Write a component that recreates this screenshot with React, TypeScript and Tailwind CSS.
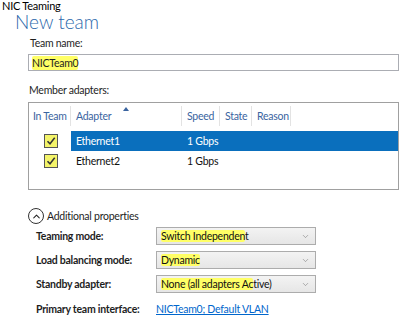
import { ChevronUp, ChevronDown } from 'lucide-react'

function Hl({ children }: { children: React.ReactNode }) {
  return <span className="bg-[#ffff66] rounded-[2px]">{children}</span>
}

function Check() {
  return (
    <div className="flex h-[14px] w-[14px] items-center justify-center border border-[#555] bg-[#f4f46a]">
      <svg width="10" height="10" viewBox="0 0 10 10">
        <path d="M1.5 5.2 L4 7.8 L8.7 1.8" fill="none" stroke="#333" strokeWidth="1.5" />
      </svg>
    </div>
  )
}

function Select({ children }: { children: React.ReactNode }) {
  return (
    <div className="flex h-[18px] w-[160px] items-center justify-between border border-[#acacac] bg-gradient-to-b from-[#f3f3f3] to-[#e6e6e6] pl-[4px] pr-[5px] text-[#111]">
      <span className="whitespace-nowrap">{children}</span>
      <ChevronDown size={9} strokeWidth={1.5} className="text-[#777]" />
    </div>
  )
}

export default function App() {
  const cols = [
    { name: 'Adapter', w: 'w-[111px]' },
    { name: 'Speed', w: 'w-[38px]' },
    { name: 'State', w: 'w-[32px]' },
    { name: 'Reason', w: 'w-[39px]' },
  ]
  const rows = ['Ethernet1', 'Ethernet2']

  return (
    <div className="h-[316px] w-[400px] overflow-hidden bg-white font-['Lato',sans-serif] text-[10.5px] leading-[14px] tracking-[-0.25px] text-[#1e1e1e]">
      <div className="h-[11px] pl-[2px] pt-[1px] text-[11px] leading-[10px] text-black">NIC Teaming</div>
      <div className="ml-[15px] h-[22px] text-[19px] font-light leading-[22px] tracking-normal text-[#2b68ab]">New team</div>

      <div className="pl-[28px]">
        <div className="mt-[3px] h-[14px] pl-[2px]">Team name:</div>
        <div className="mt-[4px] flex h-[17px] w-[371px] items-center border border-[#abadb3] pl-[3px]">
          <Hl>NICTeam0</Hl>
        </div>

        <div className="mt-[12px] h-[14px] pl-[1px]">Member adapters:</div>

        <div className="mt-[5px] h-[88px] w-[371px] border border-[#a0a0a0]">
          <div className="mt-[2px] flex h-[22px] items-center whitespace-nowrap text-[#3a64a0]">
            <div className="flex h-[20px] w-[42px] items-center border-r border-[#e3e3e3] pl-[4px]">In Team</div>
            {cols.map((c) => (
              <div key={c.name} className={`relative flex h-[20px] items-center border-r border-[#e3e3e3] pl-[5px] ${c.w}`}>
                {c.name}
                {c.name === 'Adapter' && (
                  <svg className="absolute left-[52px] top-[1px]" width="6" height="4" viewBox="0 0 6 4">
                    <path d="M0 4 L3 0 L6 4 Z" fill="#3a64a0" />
                  </svg>
                )}
              </div>
            ))}
          </div>
          <div className="mt-[4px]">
            {rows.map((r, i) => (
              <div key={r} className="flex h-[20px] items-center">
                <div className="flex w-[42px] justify-center pl-[2px]">
                  <Check />
                </div>
                <div className={`flex h-full flex-1 items-center ${i === 0 ? 'bg-[#0a6fbd] text-white' : 'text-[#111]'}`}>
                  <div className="w-[111px] pl-[5px]">{r}</div>
                  <div className="pl-[5px]">1 Gbps</div>
                </div>
              </div>
            ))}
          </div>
        </div>

        <div className="mt-[18px] flex items-center gap-[3px]">
          <div className="flex h-[16px] w-[16px] items-center justify-center rounded-full border border-[#333]">
            <ChevronUp size={11} strokeWidth={2.2} className="text-[#222]" />
          </div>
          <span>Additional properties</span>
        </div>

        <div className="mt-[3px] flex flex-col gap-[6px] pl-[8px] whitespace-nowrap">
          <div className="flex items-center">
            <div className="w-[120px] font-bold">Teaming mode:</div>
            <Select>
              <Hl>Switch Independen</Hl>t
            </Select>
          </div>
          <div className="flex items-center">
            <div className="w-[120px] font-bold">Load balancing mode:</div>
            <Select>
              <Hl>Dynamic</Hl>
            </Select>
          </div>
          <div className="flex items-center">
            <div className="w-[120px] font-bold">Standby adapter:</div>
            <Select>
              <Hl>None (all adapters Ac</Hl>tive)
            </Select>
          </div>
          <div className="mt-[3px] flex items-center">
            <div className="w-[120px] font-bold">Primary team interface:</div>
            <a className="text-[#0066cc] underline">NICTeam0; Default VLAN</a>
          </div>
        </div>
      </div>
    </div>
  )
}
